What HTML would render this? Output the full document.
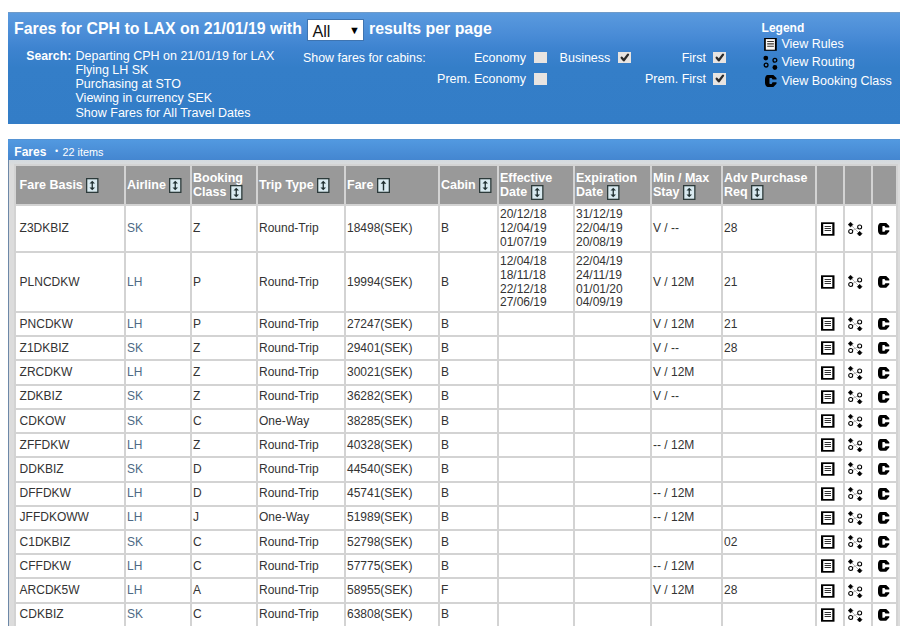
<!DOCTYPE html>
<html><head><meta charset="utf-8">
<style>
html,body{margin:0;padding:0;background:#fff;overflow:hidden;}
body{width:900px;height:626px;position:relative;font-family:"Liberation Sans",sans-serif;}
.a{position:absolute;white-space:nowrap;}
.hdr{position:absolute;left:8px;top:12px;width:900px;height:111px;
 background:linear-gradient(to bottom,#5a9ade 0px,#4b8dd7 20px,#3d83cf 36px,#347ec8 55px,#337dc7 112px);border-top:1px solid #6f9bc9;}
.w{color:#fff;}
.t16{font-size:15.9px;font-weight:bold;line-height:16px;}
.t12{font-size:12.5px;line-height:14px;}
.b12{font-size:12px;font-weight:bold;line-height:14px;}
.sel{position:absolute;left:306.8px;top:19px;width:57.7px;height:22px;background:#fff;border:0.75px solid #3f74b0;box-sizing:border-box;}
.cb{position:absolute;width:12.5px;height:11.5px;background:#e8e4e1;border:0;}
.cb svg{position:absolute;left:1px;top:0px;}
.panel{position:absolute;left:8px;top:139px;width:900px;height:500px;background:linear-gradient(to bottom,#d3d9df 21px,#dcdcdc 27px);border-left:1px solid #6d88a8;}
.pbar{position:absolute;left:8px;top:139px;width:900px;height:21px;background:linear-gradient(to bottom,#5a8fc8 0,#5299e0 1px,#4486d0 21px);}
.ft{position:absolute;left:14px;top:164px;background:#d3d3d3;border-collapse:separate;border-spacing:2px;table-layout:fixed;width:884px;font-size:12px;color:#333;}
.ft td{padding:1px 0 0 1px;vertical-align:middle;background:#fff;white-space:nowrap;overflow:hidden;line-height:13.8px;}
.ft td.c1{padding-left:3.6px;}
.ft tr.th td{padding-top:0;background:#999;color:#fff;font-weight:bold;font-size:12.5px;line-height:14.5px;}
.ft td.ln{color:#4e6a85;}
.ft td.ic{text-align:left;padding:0;}
.ft svg{vertical-align:middle;}
.si{vertical-align:-0.1px !important;margin:-4px 0 -4px 0;}
</style></head><body>
<div class="hdr"></div>
<div class="a w t16" style="left:14px;top:20.5px">Fares for CPH to LAX on 21/01/19 with</div>
<div class="sel"><span class="a" style="left:4.6px;top:2.6px;font-size:16.2px;line-height:16px;color:#111">All</span><span class="a" style="left:41.2px;top:4.3px;font-size:11px;color:#000">&#9660;</span></div>
<div class="a w t16" style="left:369px;top:20.5px">results per page</div>

<div class="a w b12" style="left:26.3px;top:48.5px;font-size:12.25px">Search:</div>
<div class="a w t12" style="left:75.5px;top:48.5px">Departing CPH on 21/01/19 for LAX</div>
<div class="a w t12" style="left:75.5px;top:62.8px">Flying LH SK</div>
<div class="a w t12" style="left:75.5px;top:77.1px">Purchasing at STO</div>
<div class="a w t12" style="left:75.5px;top:91.4px">Viewing in currency SEK</div>
<div class="a w t12" style="left:75.5px;top:105.7px">Show Fares for All Travel Dates</div>

<div class="a w t12" style="left:303px;top:50.8px;font-size:12.4px">Show fares for cabins:</div>
<div class="a w t12" style="right:374px;top:50.8px">Economy</div>
<div class="cb" style="left:534.3px;top:51.9px"></div>
<div class="a w t12" style="left:559.6px;top:50.8px">Business</div>
<div class="cb" style="left:618.3px;top:51.9px"><svg width="12" height="11" viewBox="0 0 12 11"><path d="M2.7 5.7 L4.8 8.3 L9.0 2.6" fill="none" stroke="#2b2b2b" stroke-width="2.3" stroke-linecap="round" stroke-linejoin="round"/></svg></div>
<div class="a w t12" style="right:194px;top:50.8px">First</div>
<div class="cb" style="left:713.2px;top:51.9px"><svg width="12" height="11" viewBox="0 0 12 11"><path d="M2.7 5.7 L4.8 8.3 L9.0 2.6" fill="none" stroke="#2b2b2b" stroke-width="2.3" stroke-linecap="round" stroke-linejoin="round"/></svg></div>
<div class="a w t12" style="right:374px;top:71.8px">Prem. Economy</div>
<div class="cb" style="left:534.3px;top:73.1px"></div>
<div class="a w t12" style="right:194px;top:71.8px">Prem. First</div>
<div class="cb" style="left:713.2px;top:73.1px"><svg width="12" height="11" viewBox="0 0 12 11"><path d="M2.7 5.7 L4.8 8.3 L9.0 2.6" fill="none" stroke="#2b2b2b" stroke-width="2.3" stroke-linecap="round" stroke-linejoin="round"/></svg></div>

<div class="a w b12" style="left:761.6px;top:21.1px">Legend</div>
<div class="a" style="left:764px;top:38px;line-height:0"><svg width="13" height="13" viewBox="0 0 13 13"><rect x="0.1" y="0" width="12.7" height="12.8" fill="#000"/><rect x="1.8" y="1.1" width="9.1" height="10.6" fill="#fbf8f6"/><path d="M3.2 3.5 H9.9 M3.2 5.9 H9.9 M3.2 8.3 H9.9" stroke="#3a3430" stroke-width="1.1"/></svg></div>
<div class="a w t12" style="left:781.4px;top:37px">View Rules</div>
<div class="a" style="left:763px;top:55px;line-height:0"><svg width="15" height="15" viewBox="0 0 15 15"><circle cx="2.8" cy="3.1" r="2.4" fill="#000"/><circle cx="11.9" cy="5.2" r="1.9" fill="none" stroke="#000" stroke-width="1.3"/><circle cx="3.1" cy="10.1" r="1.9" fill="none" stroke="#000" stroke-width="1.3"/><circle cx="11.9" cy="12.5" r="2.4" fill="#000"/></svg></div>
<div class="a w t12" style="left:781.4px;top:55px">View Routing</div>
<div class="a" style="left:764.6px;top:74.8px;line-height:0"><svg width="12" height="12" viewBox="0 0 12 12"><path d="M2.6 0 H8.22 L11.29 3.0 V4.4 H7.4 L6.5 2.95 H4.9 Q4.38 2.95 4.38 3.5 V8.25 Q4.38 8.8 4.9 8.8 H6.5 L7.4 7.2 H11.29 V8.6 L8.22 11.73 H2.6 C1.1 11.73 0 9.6 0 7.6 V4.1 C0 2.1 1.1 0 2.6 0 Z" transform="scale(1.02 1.015)" fill="#000"/></svg></div>
<div class="a w t12" style="left:781.4px;top:73.9px">View Booking Class</div>

<div class="panel"></div>
<div class="pbar"></div>
<div class="a w b12" style="left:14.3px;top:144.7px">Fares</div>
<div class="a w" style="left:55px;top:146px;font-size:9px;line-height:10px">&#8226;</div>
<div class="a w" style="left:62.5px;top:145.6px;font-size:10.8px;line-height:12px">22 items</div>

<table class="ft"><colgroup>
<col style="width:108px">
<col style="width:64px">
<col style="width:64px">
<col style="width:86px">
<col style="width:92px">
<col style="width:57px">
<col style="width:74px">
<col style="width:75px">
<col style="width:69px">
<col style="width:92px">
<col style="width:26px">
<col style="width:26px">
<col style="width:23px">
</colgroup><tr class="th" style="height:38px">
<td class="c1">Fare Basis <svg class="si" width="13" height="15" viewBox="0 0 13 15"><rect x="0.65" y="0.65" width="11.2" height="13.7" fill="#d9eaf0" stroke="#2c3a3a" stroke-width="1.3"/><path d="M6.25 2.7 L9 5.4 H3.5 Z M5.6 5.2 H6.9 V9.8 H5.6 Z M3.5 9.6 H9 L6.25 12.3 Z" fill="#1f2f30"/></svg></td>
<td>Airline <svg class="si" width="13" height="15" viewBox="0 0 13 15"><rect x="0.65" y="0.65" width="11.2" height="13.7" fill="#d9eaf0" stroke="#2c3a3a" stroke-width="1.3"/><path d="M6.25 2.7 L9 5.4 H3.5 Z M5.6 5.2 H6.9 V9.8 H5.6 Z M3.5 9.6 H9 L6.25 12.3 Z" fill="#1f2f30"/></svg></td>
<td>Booking<br>Class <svg class="si" width="13" height="15" viewBox="0 0 13 15"><rect x="0.65" y="0.65" width="11.2" height="13.7" fill="#d9eaf0" stroke="#2c3a3a" stroke-width="1.3"/><path d="M6.25 2.7 L9 5.4 H3.5 Z M5.6 5.2 H6.9 V9.8 H5.6 Z M3.5 9.6 H9 L6.25 12.3 Z" fill="#1f2f30"/></svg></td>
<td>Trip Type <svg class="si" width="13" height="15" viewBox="0 0 13 15"><rect x="0.65" y="0.65" width="11.2" height="13.7" fill="#d9eaf0" stroke="#2c3a3a" stroke-width="1.3"/><path d="M6.25 2.7 L9 5.4 H3.5 Z M5.6 5.2 H6.9 V9.8 H5.6 Z M3.5 9.6 H9 L6.25 12.3 Z" fill="#1f2f30"/></svg></td>
<td>Fare <svg class="si" width="13" height="15" viewBox="0 0 13 15"><rect x="0.65" y="0.65" width="11.7" height="13.7" fill="#d9eaf0" stroke="#2c3a3a" stroke-width="1.3"/><path d="M6.5 2.6 L9.3 5.8 H3.7 Z M5.8 5.5 H7.2 V12.5 H5.8 Z" fill="#1f2f30"/></svg></td>
<td>Cabin <svg class="si" width="13" height="15" viewBox="0 0 13 15"><rect x="0.65" y="0.65" width="11.2" height="13.7" fill="#d9eaf0" stroke="#2c3a3a" stroke-width="1.3"/><path d="M6.25 2.7 L9 5.4 H3.5 Z M5.6 5.2 H6.9 V9.8 H5.6 Z M3.5 9.6 H9 L6.25 12.3 Z" fill="#1f2f30"/></svg></td>
<td>Effective<br>Date <svg class="si" width="13" height="15" viewBox="0 0 13 15"><rect x="0.65" y="0.65" width="11.2" height="13.7" fill="#d9eaf0" stroke="#2c3a3a" stroke-width="1.3"/><path d="M6.25 2.7 L9 5.4 H3.5 Z M5.6 5.2 H6.9 V9.8 H5.6 Z M3.5 9.6 H9 L6.25 12.3 Z" fill="#1f2f30"/></svg></td>
<td>Expiration<br>Date <svg class="si" width="13" height="15" viewBox="0 0 13 15"><rect x="0.65" y="0.65" width="11.2" height="13.7" fill="#d9eaf0" stroke="#2c3a3a" stroke-width="1.3"/><path d="M6.25 2.7 L9 5.4 H3.5 Z M5.6 5.2 H6.9 V9.8 H5.6 Z M3.5 9.6 H9 L6.25 12.3 Z" fill="#1f2f30"/></svg></td>
<td>Min / Max<br>Stay <svg class="si" width="13" height="15" viewBox="0 0 13 15"><rect x="0.65" y="0.65" width="11.2" height="13.7" fill="#d9eaf0" stroke="#2c3a3a" stroke-width="1.3"/><path d="M6.25 2.7 L9 5.4 H3.5 Z M5.6 5.2 H6.9 V9.8 H5.6 Z M3.5 9.6 H9 L6.25 12.3 Z" fill="#1f2f30"/></svg></td>
<td>Adv Purchase<br>Req <svg class="si" width="13" height="15" viewBox="0 0 13 15"><rect x="0.65" y="0.65" width="11.2" height="13.7" fill="#d9eaf0" stroke="#2c3a3a" stroke-width="1.3"/><path d="M6.25 2.7 L9 5.4 H3.5 Z M5.6 5.2 H6.9 V9.8 H5.6 Z M3.5 9.6 H9 L6.25 12.3 Z" fill="#1f2f30"/></svg></td>
<td></td>
<td></td>
<td></td>
</tr>
<tr style="height:45px">
<td class="c1">Z3DKBIZ</td>
<td class="ln">SK</td>
<td>Z</td>
<td>Round-Trip</td>
<td>18498(SEK)</td>
<td>B</td>
<td>20/12/18<br>12/04/19<br>01/07/19</td>
<td>31/12/19<br>22/04/19<br>20/08/19</td>
<td>V / --</td>
<td>28</td>
<td class="ic"><svg style="display:block;margin-left:3.5px" width="14" height="14" viewBox="0 0 14 14"><rect x="0" y="0.3" width="13.5" height="13.4" fill="#000"/><rect x="2.2" y="2" width="9.1" height="10" fill="#fff"/><path d="M3.6 4.5 H10 M3.6 6.5 H10 M3.6 8.5 H10" stroke="#333" stroke-width="1"/></svg></td><td class="ic"><svg style="display:block;margin-left:3px" width="15" height="14" viewBox="0 0 15 14"><path d="M2.55 2.6 L11.66 11.7 M2.7 9.46 L11.66 5" stroke="#b0b0b0" stroke-width="0.9"/><path d="M2.55 0.25 L4.90 2.60 L2.55 4.95 L0.20 2.60 Z M11.66 9.35 L14.01 11.70 L11.66 14.05 L9.31 11.70 Z" fill="#000" stroke="#000" stroke-width="0.6" stroke-linejoin="round"/><circle cx="11.66" cy="5" r="2.0" fill="#fff" stroke="#000" stroke-width="1.05"/><circle cx="2.7" cy="9.46" r="2.0" fill="#fff" stroke="#000" stroke-width="1.05"/></svg></td><td class="ic ic3"><svg style="display:block;margin-left:4.8px" width="12" height="12" viewBox="0 0 12 12"><path d="M2.6 0 H8.22 L11.29 3.0 V4.4 H7.4 L6.5 2.95 H4.9 Q4.38 2.95 4.38 3.5 V8.25 Q4.38 8.8 4.9 8.8 H6.5 L7.4 7.2 H11.29 V8.6 L8.22 11.73 H2.6 C1.1 11.73 0 9.6 0 7.6 V4.1 C0 2.1 1.1 0 2.6 0 Z" fill="#000"/></svg></td>
</tr>
<tr style="height:58px">
<td class="c1">PLNCDKW</td>
<td class="ln">LH</td>
<td>P</td>
<td>Round-Trip</td>
<td>19994(SEK)</td>
<td>B</td>
<td>12/04/18<br>18/11/18<br>22/12/18<br>27/06/19</td>
<td>22/04/19<br>24/11/19<br>01/01/20<br>04/09/19</td>
<td>V / 12M</td>
<td>21</td>
<td class="ic"><svg style="display:block;margin-left:3.5px" width="14" height="14" viewBox="0 0 14 14"><rect x="0" y="0.3" width="13.5" height="13.4" fill="#000"/><rect x="2.2" y="2" width="9.1" height="10" fill="#fff"/><path d="M3.6 4.5 H10 M3.6 6.5 H10 M3.6 8.5 H10" stroke="#333" stroke-width="1"/></svg></td><td class="ic"><svg style="display:block;margin-left:3px" width="15" height="14" viewBox="0 0 15 14"><path d="M2.55 2.6 L11.66 11.7 M2.7 9.46 L11.66 5" stroke="#b0b0b0" stroke-width="0.9"/><path d="M2.55 0.25 L4.90 2.60 L2.55 4.95 L0.20 2.60 Z M11.66 9.35 L14.01 11.70 L11.66 14.05 L9.31 11.70 Z" fill="#000" stroke="#000" stroke-width="0.6" stroke-linejoin="round"/><circle cx="11.66" cy="5" r="2.0" fill="#fff" stroke="#000" stroke-width="1.05"/><circle cx="2.7" cy="9.46" r="2.0" fill="#fff" stroke="#000" stroke-width="1.05"/></svg></td><td class="ic ic3"><svg style="display:block;margin-left:4.8px" width="12" height="12" viewBox="0 0 12 12"><path d="M2.6 0 H8.22 L11.29 3.0 V4.4 H7.4 L6.5 2.95 H4.9 Q4.38 2.95 4.38 3.5 V8.25 Q4.38 8.8 4.9 8.8 H6.5 L7.4 7.2 H11.29 V8.6 L8.22 11.73 H2.6 C1.1 11.73 0 9.6 0 7.6 V4.1 C0 2.1 1.1 0 2.6 0 Z" fill="#000"/></svg></td>
</tr>
<tr style="height:22.22px">
<td class="c1">PNCDKW</td>
<td class="ln">LH</td>
<td>P</td>
<td>Round-Trip</td>
<td>27247(SEK)</td>
<td>B</td>
<td></td>
<td></td>
<td>V / 12M</td>
<td>21</td>
<td class="ic"><svg style="display:block;margin-left:3.5px" width="14" height="14" viewBox="0 0 14 14"><rect x="0" y="0.3" width="13.5" height="13.4" fill="#000"/><rect x="2.2" y="2" width="9.1" height="10" fill="#fff"/><path d="M3.6 4.5 H10 M3.6 6.5 H10 M3.6 8.5 H10" stroke="#333" stroke-width="1"/></svg></td><td class="ic"><svg style="display:block;margin-left:3px" width="15" height="14" viewBox="0 0 15 14"><path d="M2.55 2.6 L11.66 11.7 M2.7 9.46 L11.66 5" stroke="#b0b0b0" stroke-width="0.9"/><path d="M2.55 0.25 L4.90 2.60 L2.55 4.95 L0.20 2.60 Z M11.66 9.35 L14.01 11.70 L11.66 14.05 L9.31 11.70 Z" fill="#000" stroke="#000" stroke-width="0.6" stroke-linejoin="round"/><circle cx="11.66" cy="5" r="2.0" fill="#fff" stroke="#000" stroke-width="1.05"/><circle cx="2.7" cy="9.46" r="2.0" fill="#fff" stroke="#000" stroke-width="1.05"/></svg></td><td class="ic ic3"><svg style="display:block;margin-left:4.8px" width="12" height="12" viewBox="0 0 12 12"><path d="M2.6 0 H8.22 L11.29 3.0 V4.4 H7.4 L6.5 2.95 H4.9 Q4.38 2.95 4.38 3.5 V8.25 Q4.38 8.8 4.9 8.8 H6.5 L7.4 7.2 H11.29 V8.6 L8.22 11.73 H2.6 C1.1 11.73 0 9.6 0 7.6 V4.1 C0 2.1 1.1 0 2.6 0 Z" fill="#000"/></svg></td>
</tr>
<tr style="height:22.22px">
<td class="c1">Z1DKBIZ</td>
<td class="ln">SK</td>
<td>Z</td>
<td>Round-Trip</td>
<td>29401(SEK)</td>
<td>B</td>
<td></td>
<td></td>
<td>V / --</td>
<td>28</td>
<td class="ic"><svg style="display:block;margin-left:3.5px" width="14" height="14" viewBox="0 0 14 14"><rect x="0" y="0.3" width="13.5" height="13.4" fill="#000"/><rect x="2.2" y="2" width="9.1" height="10" fill="#fff"/><path d="M3.6 4.5 H10 M3.6 6.5 H10 M3.6 8.5 H10" stroke="#333" stroke-width="1"/></svg></td><td class="ic"><svg style="display:block;margin-left:3px" width="15" height="14" viewBox="0 0 15 14"><path d="M2.55 2.6 L11.66 11.7 M2.7 9.46 L11.66 5" stroke="#b0b0b0" stroke-width="0.9"/><path d="M2.55 0.25 L4.90 2.60 L2.55 4.95 L0.20 2.60 Z M11.66 9.35 L14.01 11.70 L11.66 14.05 L9.31 11.70 Z" fill="#000" stroke="#000" stroke-width="0.6" stroke-linejoin="round"/><circle cx="11.66" cy="5" r="2.0" fill="#fff" stroke="#000" stroke-width="1.05"/><circle cx="2.7" cy="9.46" r="2.0" fill="#fff" stroke="#000" stroke-width="1.05"/></svg></td><td class="ic ic3"><svg style="display:block;margin-left:4.8px" width="12" height="12" viewBox="0 0 12 12"><path d="M2.6 0 H8.22 L11.29 3.0 V4.4 H7.4 L6.5 2.95 H4.9 Q4.38 2.95 4.38 3.5 V8.25 Q4.38 8.8 4.9 8.8 H6.5 L7.4 7.2 H11.29 V8.6 L8.22 11.73 H2.6 C1.1 11.73 0 9.6 0 7.6 V4.1 C0 2.1 1.1 0 2.6 0 Z" fill="#000"/></svg></td>
</tr>
<tr style="height:22.22px">
<td class="c1">ZRCDKW</td>
<td class="ln">LH</td>
<td>Z</td>
<td>Round-Trip</td>
<td>30021(SEK)</td>
<td>B</td>
<td></td>
<td></td>
<td>V / 12M</td>
<td></td>
<td class="ic"><svg style="display:block;margin-left:3.5px" width="14" height="14" viewBox="0 0 14 14"><rect x="0" y="0.3" width="13.5" height="13.4" fill="#000"/><rect x="2.2" y="2" width="9.1" height="10" fill="#fff"/><path d="M3.6 4.5 H10 M3.6 6.5 H10 M3.6 8.5 H10" stroke="#333" stroke-width="1"/></svg></td><td class="ic"><svg style="display:block;margin-left:3px" width="15" height="14" viewBox="0 0 15 14"><path d="M2.55 2.6 L11.66 11.7 M2.7 9.46 L11.66 5" stroke="#b0b0b0" stroke-width="0.9"/><path d="M2.55 0.25 L4.90 2.60 L2.55 4.95 L0.20 2.60 Z M11.66 9.35 L14.01 11.70 L11.66 14.05 L9.31 11.70 Z" fill="#000" stroke="#000" stroke-width="0.6" stroke-linejoin="round"/><circle cx="11.66" cy="5" r="2.0" fill="#fff" stroke="#000" stroke-width="1.05"/><circle cx="2.7" cy="9.46" r="2.0" fill="#fff" stroke="#000" stroke-width="1.05"/></svg></td><td class="ic ic3"><svg style="display:block;margin-left:4.8px" width="12" height="12" viewBox="0 0 12 12"><path d="M2.6 0 H8.22 L11.29 3.0 V4.4 H7.4 L6.5 2.95 H4.9 Q4.38 2.95 4.38 3.5 V8.25 Q4.38 8.8 4.9 8.8 H6.5 L7.4 7.2 H11.29 V8.6 L8.22 11.73 H2.6 C1.1 11.73 0 9.6 0 7.6 V4.1 C0 2.1 1.1 0 2.6 0 Z" fill="#000"/></svg></td>
</tr>
<tr style="height:22.22px">
<td class="c1">ZDKBIZ</td>
<td class="ln">SK</td>
<td>Z</td>
<td>Round-Trip</td>
<td>36282(SEK)</td>
<td>B</td>
<td></td>
<td></td>
<td>V / --</td>
<td></td>
<td class="ic"><svg style="display:block;margin-left:3.5px" width="14" height="14" viewBox="0 0 14 14"><rect x="0" y="0.3" width="13.5" height="13.4" fill="#000"/><rect x="2.2" y="2" width="9.1" height="10" fill="#fff"/><path d="M3.6 4.5 H10 M3.6 6.5 H10 M3.6 8.5 H10" stroke="#333" stroke-width="1"/></svg></td><td class="ic"><svg style="display:block;margin-left:3px" width="15" height="14" viewBox="0 0 15 14"><path d="M2.55 2.6 L11.66 11.7 M2.7 9.46 L11.66 5" stroke="#b0b0b0" stroke-width="0.9"/><path d="M2.55 0.25 L4.90 2.60 L2.55 4.95 L0.20 2.60 Z M11.66 9.35 L14.01 11.70 L11.66 14.05 L9.31 11.70 Z" fill="#000" stroke="#000" stroke-width="0.6" stroke-linejoin="round"/><circle cx="11.66" cy="5" r="2.0" fill="#fff" stroke="#000" stroke-width="1.05"/><circle cx="2.7" cy="9.46" r="2.0" fill="#fff" stroke="#000" stroke-width="1.05"/></svg></td><td class="ic ic3"><svg style="display:block;margin-left:4.8px" width="12" height="12" viewBox="0 0 12 12"><path d="M2.6 0 H8.22 L11.29 3.0 V4.4 H7.4 L6.5 2.95 H4.9 Q4.38 2.95 4.38 3.5 V8.25 Q4.38 8.8 4.9 8.8 H6.5 L7.4 7.2 H11.29 V8.6 L8.22 11.73 H2.6 C1.1 11.73 0 9.6 0 7.6 V4.1 C0 2.1 1.1 0 2.6 0 Z" fill="#000"/></svg></td>
</tr>
<tr style="height:22.22px">
<td class="c1">CDKOW</td>
<td class="ln">SK</td>
<td>C</td>
<td>One-Way</td>
<td>38285(SEK)</td>
<td>B</td>
<td></td>
<td></td>
<td></td>
<td></td>
<td class="ic"><svg style="display:block;margin-left:3.5px" width="14" height="14" viewBox="0 0 14 14"><rect x="0" y="0.3" width="13.5" height="13.4" fill="#000"/><rect x="2.2" y="2" width="9.1" height="10" fill="#fff"/><path d="M3.6 4.5 H10 M3.6 6.5 H10 M3.6 8.5 H10" stroke="#333" stroke-width="1"/></svg></td><td class="ic"><svg style="display:block;margin-left:3px" width="15" height="14" viewBox="0 0 15 14"><path d="M2.55 2.6 L11.66 11.7 M2.7 9.46 L11.66 5" stroke="#b0b0b0" stroke-width="0.9"/><path d="M2.55 0.25 L4.90 2.60 L2.55 4.95 L0.20 2.60 Z M11.66 9.35 L14.01 11.70 L11.66 14.05 L9.31 11.70 Z" fill="#000" stroke="#000" stroke-width="0.6" stroke-linejoin="round"/><circle cx="11.66" cy="5" r="2.0" fill="#fff" stroke="#000" stroke-width="1.05"/><circle cx="2.7" cy="9.46" r="2.0" fill="#fff" stroke="#000" stroke-width="1.05"/></svg></td><td class="ic ic3"><svg style="display:block;margin-left:4.8px" width="12" height="12" viewBox="0 0 12 12"><path d="M2.6 0 H8.22 L11.29 3.0 V4.4 H7.4 L6.5 2.95 H4.9 Q4.38 2.95 4.38 3.5 V8.25 Q4.38 8.8 4.9 8.8 H6.5 L7.4 7.2 H11.29 V8.6 L8.22 11.73 H2.6 C1.1 11.73 0 9.6 0 7.6 V4.1 C0 2.1 1.1 0 2.6 0 Z" fill="#000"/></svg></td>
</tr>
<tr style="height:22.22px">
<td class="c1">ZFFDKW</td>
<td class="ln">LH</td>
<td>Z</td>
<td>Round-Trip</td>
<td>40328(SEK)</td>
<td>B</td>
<td></td>
<td></td>
<td>-- / 12M</td>
<td></td>
<td class="ic"><svg style="display:block;margin-left:3.5px" width="14" height="14" viewBox="0 0 14 14"><rect x="0" y="0.3" width="13.5" height="13.4" fill="#000"/><rect x="2.2" y="2" width="9.1" height="10" fill="#fff"/><path d="M3.6 4.5 H10 M3.6 6.5 H10 M3.6 8.5 H10" stroke="#333" stroke-width="1"/></svg></td><td class="ic"><svg style="display:block;margin-left:3px" width="15" height="14" viewBox="0 0 15 14"><path d="M2.55 2.6 L11.66 11.7 M2.7 9.46 L11.66 5" stroke="#b0b0b0" stroke-width="0.9"/><path d="M2.55 0.25 L4.90 2.60 L2.55 4.95 L0.20 2.60 Z M11.66 9.35 L14.01 11.70 L11.66 14.05 L9.31 11.70 Z" fill="#000" stroke="#000" stroke-width="0.6" stroke-linejoin="round"/><circle cx="11.66" cy="5" r="2.0" fill="#fff" stroke="#000" stroke-width="1.05"/><circle cx="2.7" cy="9.46" r="2.0" fill="#fff" stroke="#000" stroke-width="1.05"/></svg></td><td class="ic ic3"><svg style="display:block;margin-left:4.8px" width="12" height="12" viewBox="0 0 12 12"><path d="M2.6 0 H8.22 L11.29 3.0 V4.4 H7.4 L6.5 2.95 H4.9 Q4.38 2.95 4.38 3.5 V8.25 Q4.38 8.8 4.9 8.8 H6.5 L7.4 7.2 H11.29 V8.6 L8.22 11.73 H2.6 C1.1 11.73 0 9.6 0 7.6 V4.1 C0 2.1 1.1 0 2.6 0 Z" fill="#000"/></svg></td>
</tr>
<tr style="height:22.22px">
<td class="c1">DDKBIZ</td>
<td class="ln">SK</td>
<td>D</td>
<td>Round-Trip</td>
<td>44540(SEK)</td>
<td>B</td>
<td></td>
<td></td>
<td></td>
<td></td>
<td class="ic"><svg style="display:block;margin-left:3.5px" width="14" height="14" viewBox="0 0 14 14"><rect x="0" y="0.3" width="13.5" height="13.4" fill="#000"/><rect x="2.2" y="2" width="9.1" height="10" fill="#fff"/><path d="M3.6 4.5 H10 M3.6 6.5 H10 M3.6 8.5 H10" stroke="#333" stroke-width="1"/></svg></td><td class="ic"><svg style="display:block;margin-left:3px" width="15" height="14" viewBox="0 0 15 14"><path d="M2.55 2.6 L11.66 11.7 M2.7 9.46 L11.66 5" stroke="#b0b0b0" stroke-width="0.9"/><path d="M2.55 0.25 L4.90 2.60 L2.55 4.95 L0.20 2.60 Z M11.66 9.35 L14.01 11.70 L11.66 14.05 L9.31 11.70 Z" fill="#000" stroke="#000" stroke-width="0.6" stroke-linejoin="round"/><circle cx="11.66" cy="5" r="2.0" fill="#fff" stroke="#000" stroke-width="1.05"/><circle cx="2.7" cy="9.46" r="2.0" fill="#fff" stroke="#000" stroke-width="1.05"/></svg></td><td class="ic ic3"><svg style="display:block;margin-left:4.8px" width="12" height="12" viewBox="0 0 12 12"><path d="M2.6 0 H8.22 L11.29 3.0 V4.4 H7.4 L6.5 2.95 H4.9 Q4.38 2.95 4.38 3.5 V8.25 Q4.38 8.8 4.9 8.8 H6.5 L7.4 7.2 H11.29 V8.6 L8.22 11.73 H2.6 C1.1 11.73 0 9.6 0 7.6 V4.1 C0 2.1 1.1 0 2.6 0 Z" fill="#000"/></svg></td>
</tr>
<tr style="height:22.22px">
<td class="c1">DFFDKW</td>
<td class="ln">LH</td>
<td>D</td>
<td>Round-Trip</td>
<td>45741(SEK)</td>
<td>B</td>
<td></td>
<td></td>
<td>-- / 12M</td>
<td></td>
<td class="ic"><svg style="display:block;margin-left:3.5px" width="14" height="14" viewBox="0 0 14 14"><rect x="0" y="0.3" width="13.5" height="13.4" fill="#000"/><rect x="2.2" y="2" width="9.1" height="10" fill="#fff"/><path d="M3.6 4.5 H10 M3.6 6.5 H10 M3.6 8.5 H10" stroke="#333" stroke-width="1"/></svg></td><td class="ic"><svg style="display:block;margin-left:3px" width="15" height="14" viewBox="0 0 15 14"><path d="M2.55 2.6 L11.66 11.7 M2.7 9.46 L11.66 5" stroke="#b0b0b0" stroke-width="0.9"/><path d="M2.55 0.25 L4.90 2.60 L2.55 4.95 L0.20 2.60 Z M11.66 9.35 L14.01 11.70 L11.66 14.05 L9.31 11.70 Z" fill="#000" stroke="#000" stroke-width="0.6" stroke-linejoin="round"/><circle cx="11.66" cy="5" r="2.0" fill="#fff" stroke="#000" stroke-width="1.05"/><circle cx="2.7" cy="9.46" r="2.0" fill="#fff" stroke="#000" stroke-width="1.05"/></svg></td><td class="ic ic3"><svg style="display:block;margin-left:4.8px" width="12" height="12" viewBox="0 0 12 12"><path d="M2.6 0 H8.22 L11.29 3.0 V4.4 H7.4 L6.5 2.95 H4.9 Q4.38 2.95 4.38 3.5 V8.25 Q4.38 8.8 4.9 8.8 H6.5 L7.4 7.2 H11.29 V8.6 L8.22 11.73 H2.6 C1.1 11.73 0 9.6 0 7.6 V4.1 C0 2.1 1.1 0 2.6 0 Z" fill="#000"/></svg></td>
</tr>
<tr style="height:22.22px">
<td class="c1">JFFDKOWW</td>
<td class="ln">LH</td>
<td>J</td>
<td>One-Way</td>
<td>51989(SEK)</td>
<td>B</td>
<td></td>
<td></td>
<td>-- / 12M</td>
<td></td>
<td class="ic"><svg style="display:block;margin-left:3.5px" width="14" height="14" viewBox="0 0 14 14"><rect x="0" y="0.3" width="13.5" height="13.4" fill="#000"/><rect x="2.2" y="2" width="9.1" height="10" fill="#fff"/><path d="M3.6 4.5 H10 M3.6 6.5 H10 M3.6 8.5 H10" stroke="#333" stroke-width="1"/></svg></td><td class="ic"><svg style="display:block;margin-left:3px" width="15" height="14" viewBox="0 0 15 14"><path d="M2.55 2.6 L11.66 11.7 M2.7 9.46 L11.66 5" stroke="#b0b0b0" stroke-width="0.9"/><path d="M2.55 0.25 L4.90 2.60 L2.55 4.95 L0.20 2.60 Z M11.66 9.35 L14.01 11.70 L11.66 14.05 L9.31 11.70 Z" fill="#000" stroke="#000" stroke-width="0.6" stroke-linejoin="round"/><circle cx="11.66" cy="5" r="2.0" fill="#fff" stroke="#000" stroke-width="1.05"/><circle cx="2.7" cy="9.46" r="2.0" fill="#fff" stroke="#000" stroke-width="1.05"/></svg></td><td class="ic ic3"><svg style="display:block;margin-left:4.8px" width="12" height="12" viewBox="0 0 12 12"><path d="M2.6 0 H8.22 L11.29 3.0 V4.4 H7.4 L6.5 2.95 H4.9 Q4.38 2.95 4.38 3.5 V8.25 Q4.38 8.8 4.9 8.8 H6.5 L7.4 7.2 H11.29 V8.6 L8.22 11.73 H2.6 C1.1 11.73 0 9.6 0 7.6 V4.1 C0 2.1 1.1 0 2.6 0 Z" fill="#000"/></svg></td>
</tr>
<tr style="height:22.22px">
<td class="c1">C1DKBIZ</td>
<td class="ln">SK</td>
<td>C</td>
<td>Round-Trip</td>
<td>52798(SEK)</td>
<td>B</td>
<td></td>
<td></td>
<td></td>
<td>02</td>
<td class="ic"><svg style="display:block;margin-left:3.5px" width="14" height="14" viewBox="0 0 14 14"><rect x="0" y="0.3" width="13.5" height="13.4" fill="#000"/><rect x="2.2" y="2" width="9.1" height="10" fill="#fff"/><path d="M3.6 4.5 H10 M3.6 6.5 H10 M3.6 8.5 H10" stroke="#333" stroke-width="1"/></svg></td><td class="ic"><svg style="display:block;margin-left:3px" width="15" height="14" viewBox="0 0 15 14"><path d="M2.55 2.6 L11.66 11.7 M2.7 9.46 L11.66 5" stroke="#b0b0b0" stroke-width="0.9"/><path d="M2.55 0.25 L4.90 2.60 L2.55 4.95 L0.20 2.60 Z M11.66 9.35 L14.01 11.70 L11.66 14.05 L9.31 11.70 Z" fill="#000" stroke="#000" stroke-width="0.6" stroke-linejoin="round"/><circle cx="11.66" cy="5" r="2.0" fill="#fff" stroke="#000" stroke-width="1.05"/><circle cx="2.7" cy="9.46" r="2.0" fill="#fff" stroke="#000" stroke-width="1.05"/></svg></td><td class="ic ic3"><svg style="display:block;margin-left:4.8px" width="12" height="12" viewBox="0 0 12 12"><path d="M2.6 0 H8.22 L11.29 3.0 V4.4 H7.4 L6.5 2.95 H4.9 Q4.38 2.95 4.38 3.5 V8.25 Q4.38 8.8 4.9 8.8 H6.5 L7.4 7.2 H11.29 V8.6 L8.22 11.73 H2.6 C1.1 11.73 0 9.6 0 7.6 V4.1 C0 2.1 1.1 0 2.6 0 Z" fill="#000"/></svg></td>
</tr>
<tr style="height:22.22px">
<td class="c1">CFFDKW</td>
<td class="ln">LH</td>
<td>C</td>
<td>Round-Trip</td>
<td>57775(SEK)</td>
<td>B</td>
<td></td>
<td></td>
<td>-- / 12M</td>
<td></td>
<td class="ic"><svg style="display:block;margin-left:3.5px" width="14" height="14" viewBox="0 0 14 14"><rect x="0" y="0.3" width="13.5" height="13.4" fill="#000"/><rect x="2.2" y="2" width="9.1" height="10" fill="#fff"/><path d="M3.6 4.5 H10 M3.6 6.5 H10 M3.6 8.5 H10" stroke="#333" stroke-width="1"/></svg></td><td class="ic"><svg style="display:block;margin-left:3px" width="15" height="14" viewBox="0 0 15 14"><path d="M2.55 2.6 L11.66 11.7 M2.7 9.46 L11.66 5" stroke="#b0b0b0" stroke-width="0.9"/><path d="M2.55 0.25 L4.90 2.60 L2.55 4.95 L0.20 2.60 Z M11.66 9.35 L14.01 11.70 L11.66 14.05 L9.31 11.70 Z" fill="#000" stroke="#000" stroke-width="0.6" stroke-linejoin="round"/><circle cx="11.66" cy="5" r="2.0" fill="#fff" stroke="#000" stroke-width="1.05"/><circle cx="2.7" cy="9.46" r="2.0" fill="#fff" stroke="#000" stroke-width="1.05"/></svg></td><td class="ic ic3"><svg style="display:block;margin-left:4.8px" width="12" height="12" viewBox="0 0 12 12"><path d="M2.6 0 H8.22 L11.29 3.0 V4.4 H7.4 L6.5 2.95 H4.9 Q4.38 2.95 4.38 3.5 V8.25 Q4.38 8.8 4.9 8.8 H6.5 L7.4 7.2 H11.29 V8.6 L8.22 11.73 H2.6 C1.1 11.73 0 9.6 0 7.6 V4.1 C0 2.1 1.1 0 2.6 0 Z" fill="#000"/></svg></td>
</tr>
<tr style="height:22.22px">
<td class="c1">ARCDK5W</td>
<td class="ln">LH</td>
<td>A</td>
<td>Round-Trip</td>
<td>58955(SEK)</td>
<td>F</td>
<td></td>
<td></td>
<td>V / 12M</td>
<td>28</td>
<td class="ic"><svg style="display:block;margin-left:3.5px" width="14" height="14" viewBox="0 0 14 14"><rect x="0" y="0.3" width="13.5" height="13.4" fill="#000"/><rect x="2.2" y="2" width="9.1" height="10" fill="#fff"/><path d="M3.6 4.5 H10 M3.6 6.5 H10 M3.6 8.5 H10" stroke="#333" stroke-width="1"/></svg></td><td class="ic"><svg style="display:block;margin-left:3px" width="15" height="14" viewBox="0 0 15 14"><path d="M2.55 2.6 L11.66 11.7 M2.7 9.46 L11.66 5" stroke="#b0b0b0" stroke-width="0.9"/><path d="M2.55 0.25 L4.90 2.60 L2.55 4.95 L0.20 2.60 Z M11.66 9.35 L14.01 11.70 L11.66 14.05 L9.31 11.70 Z" fill="#000" stroke="#000" stroke-width="0.6" stroke-linejoin="round"/><circle cx="11.66" cy="5" r="2.0" fill="#fff" stroke="#000" stroke-width="1.05"/><circle cx="2.7" cy="9.46" r="2.0" fill="#fff" stroke="#000" stroke-width="1.05"/></svg></td><td class="ic ic3"><svg style="display:block;margin-left:4.8px" width="12" height="12" viewBox="0 0 12 12"><path d="M2.6 0 H8.22 L11.29 3.0 V4.4 H7.4 L6.5 2.95 H4.9 Q4.38 2.95 4.38 3.5 V8.25 Q4.38 8.8 4.9 8.8 H6.5 L7.4 7.2 H11.29 V8.6 L8.22 11.73 H2.6 C1.1 11.73 0 9.6 0 7.6 V4.1 C0 2.1 1.1 0 2.6 0 Z" fill="#000"/></svg></td>
</tr>
<tr style="height:22.22px">
<td class="c1">CDKBIZ</td>
<td class="ln">SK</td>
<td>C</td>
<td>Round-Trip</td>
<td>63808(SEK)</td>
<td>B</td>
<td></td>
<td></td>
<td></td>
<td></td>
<td class="ic"><svg style="display:block;margin-left:3.5px" width="14" height="14" viewBox="0 0 14 14"><rect x="0" y="0.3" width="13.5" height="13.4" fill="#000"/><rect x="2.2" y="2" width="9.1" height="10" fill="#fff"/><path d="M3.6 4.5 H10 M3.6 6.5 H10 M3.6 8.5 H10" stroke="#333" stroke-width="1"/></svg></td><td class="ic"><svg style="display:block;margin-left:3px" width="15" height="14" viewBox="0 0 15 14"><path d="M2.55 2.6 L11.66 11.7 M2.7 9.46 L11.66 5" stroke="#b0b0b0" stroke-width="0.9"/><path d="M2.55 0.25 L4.90 2.60 L2.55 4.95 L0.20 2.60 Z M11.66 9.35 L14.01 11.70 L11.66 14.05 L9.31 11.70 Z" fill="#000" stroke="#000" stroke-width="0.6" stroke-linejoin="round"/><circle cx="11.66" cy="5" r="2.0" fill="#fff" stroke="#000" stroke-width="1.05"/><circle cx="2.7" cy="9.46" r="2.0" fill="#fff" stroke="#000" stroke-width="1.05"/></svg></td><td class="ic ic3"><svg style="display:block;margin-left:4.8px" width="12" height="12" viewBox="0 0 12 12"><path d="M2.6 0 H8.22 L11.29 3.0 V4.4 H7.4 L6.5 2.95 H4.9 Q4.38 2.95 4.38 3.5 V8.25 Q4.38 8.8 4.9 8.8 H6.5 L7.4 7.2 H11.29 V8.6 L8.22 11.73 H2.6 C1.1 11.73 0 9.6 0 7.6 V4.1 C0 2.1 1.1 0 2.6 0 Z" fill="#000"/></svg></td>
</tr>
<tr style="height:22.22px">
<td class="c1"></td>
<td class="ln"></td>
<td></td>
<td></td>
<td></td>
<td></td>
<td></td>
<td></td>
<td></td>
<td></td>
<td></td><td></td><td></td>
</tr>
</table>
</body></html>
